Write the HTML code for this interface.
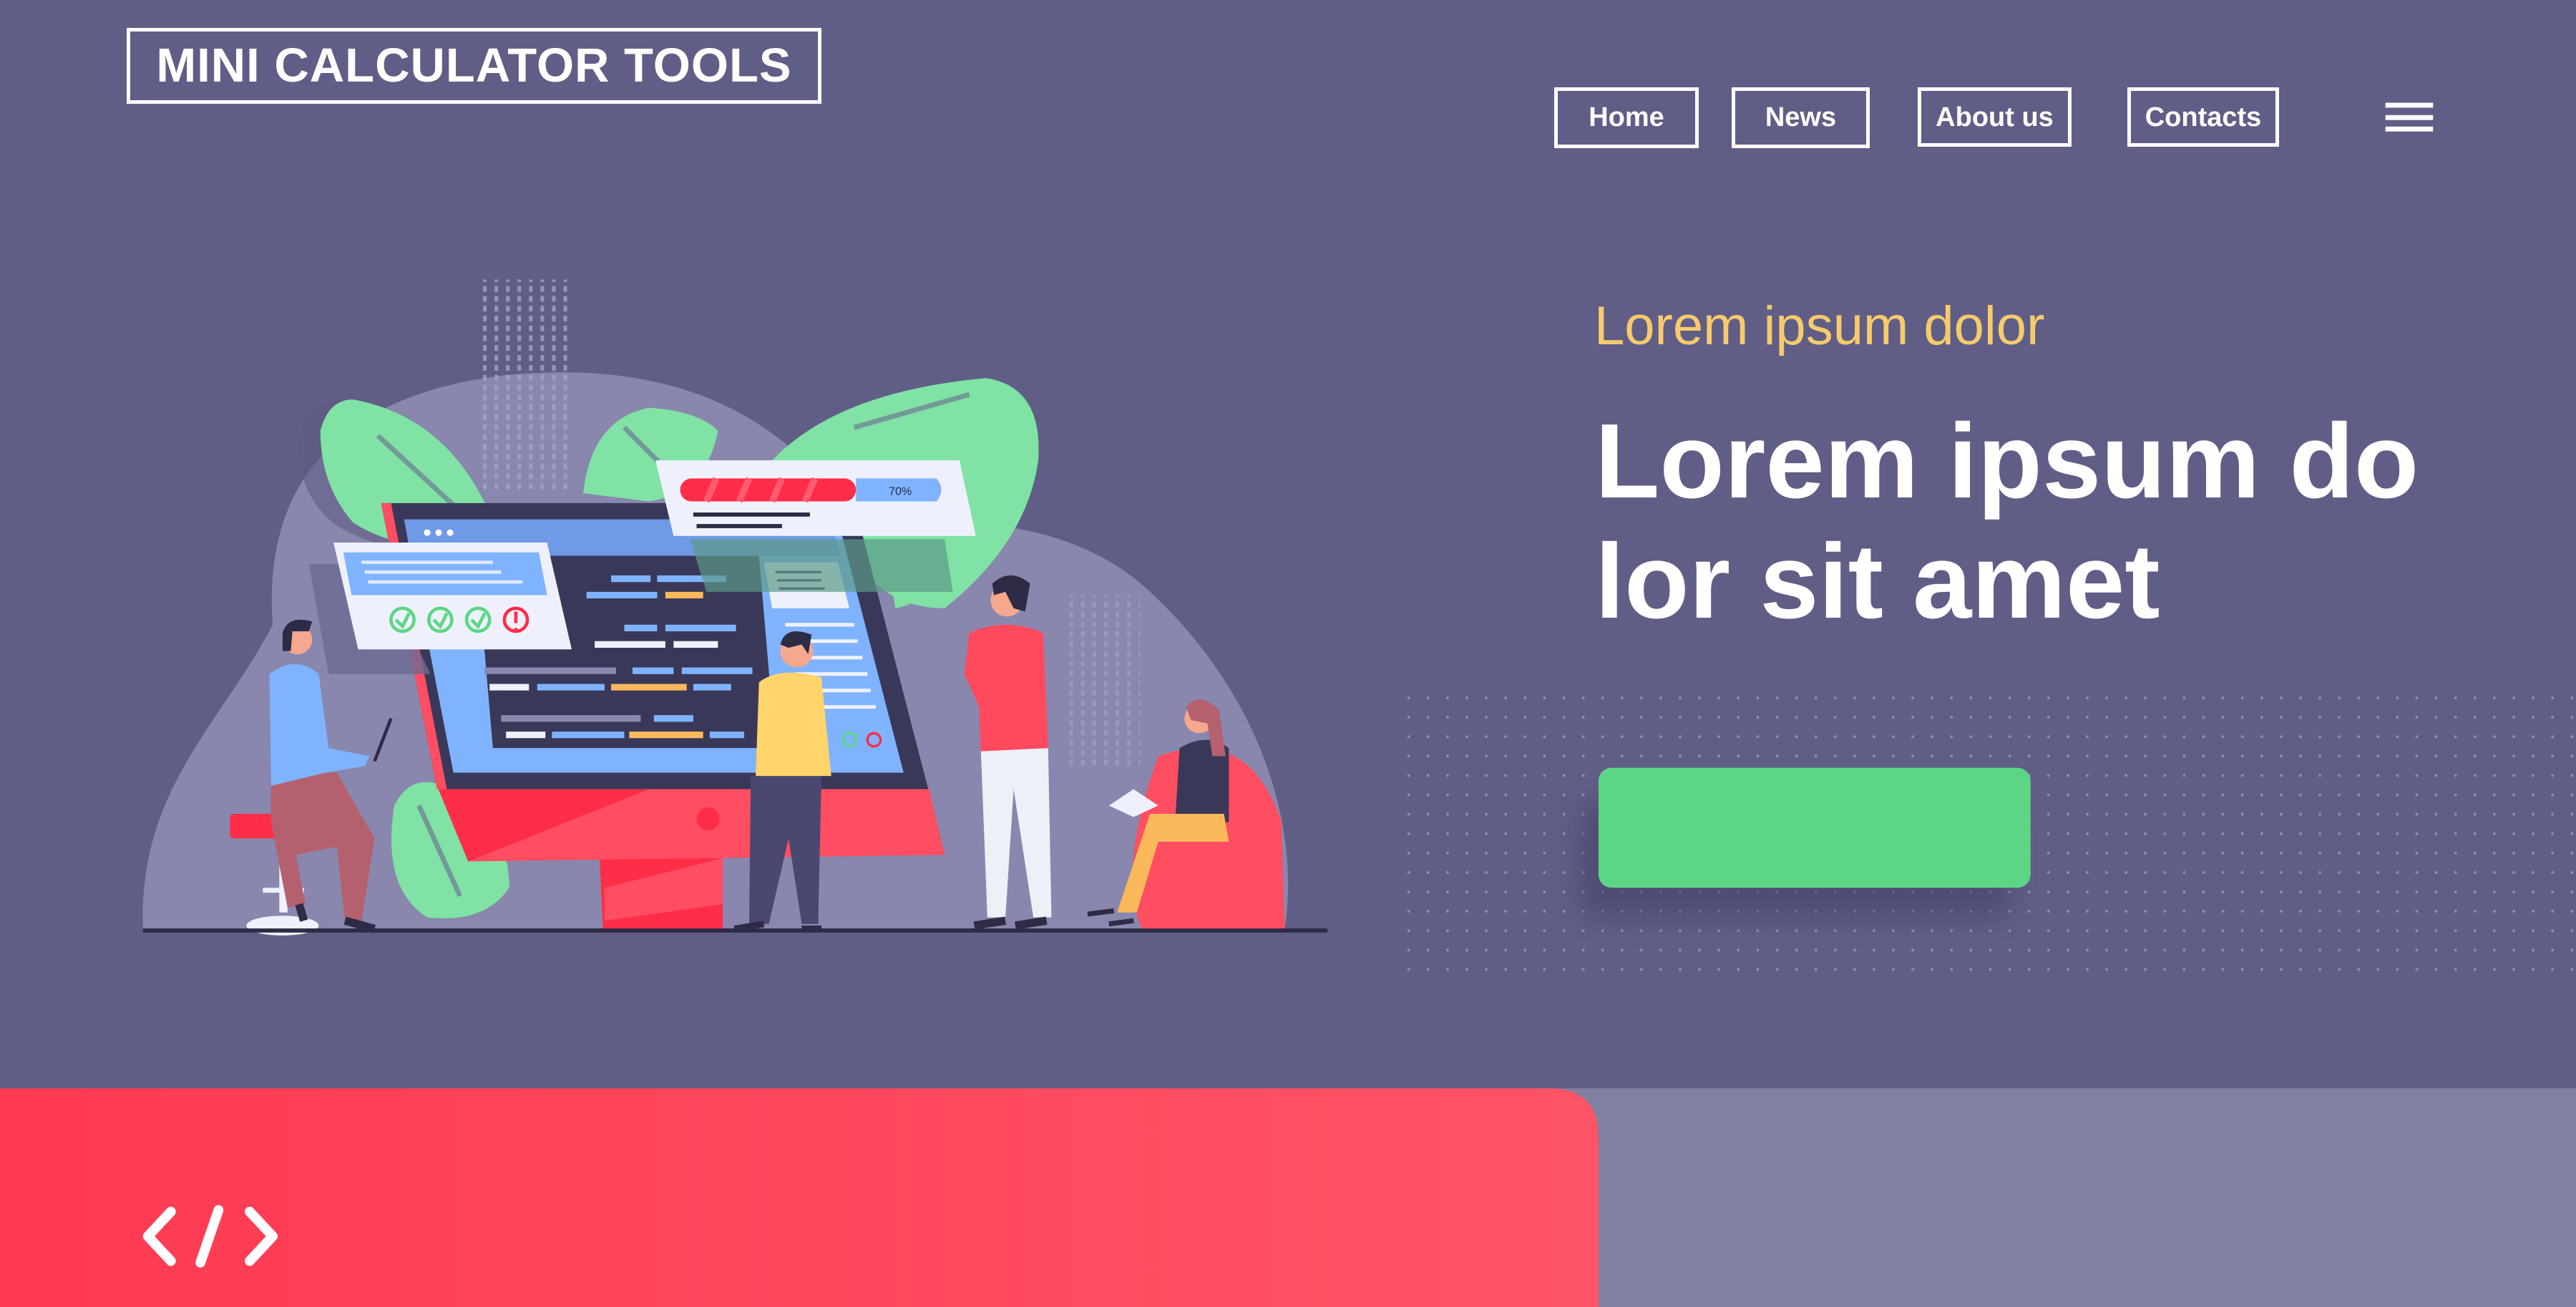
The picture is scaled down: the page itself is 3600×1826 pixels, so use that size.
<!DOCTYPE html>
<html><head><meta charset="utf-8"><style>
html,body{margin:0;padding:0;}
body{width:3600px;height:1826px;position:relative;overflow:hidden;background:#605e86;font-family:"Liberation Sans",Arial,sans-serif;}
svg.bg{position:absolute;left:0;top:0;width:3600px;height:1826px;}
.logo{position:absolute;left:177px;top:39px;width:961px;height:96px;border:5px solid #fff;color:#fff;font-weight:bold;font-size:67px;line-height:96px;text-align:center;white-space:nowrap;letter-spacing:1px;}
.nav{position:absolute;top:122px;height:75px;border:5px solid #fff;color:#fff;font-weight:bold;font-size:38px;line-height:75px;text-align:center;white-space:nowrap;}
.sub{position:absolute;left:2228px;top:418px;font-size:76px;line-height:76px;color:#f7cb6c;white-space:nowrap;}
.h1{position:absolute;left:2229px;top:561px;font-size:148px;line-height:168px;font-weight:bold;color:#fff;white-space:nowrap;}
</style></head><body>
<svg class="bg" viewBox="0 0 1568 795" preserveAspectRatio="none" xmlns="http://www.w3.org/2000/svg">
<defs>
<pattern id="dots" x="856" y="423" width="11.8" height="11.8" patternUnits="userSpaceOnUse"><circle cx="1.5" cy="1.5" r="0.9" fill="#8d8ab4"/></pattern>
<pattern id="vd" x="0" y="0" width="7" height="6" patternUnits="userSpaceOnUse"><rect x="0" y="0" width="2.2" height="3.5" fill="#a4a2c4"/></pattern>
<linearGradient id="rg" x1="0" x2="1" y1="0" y2="0"><stop offset="0" stop-color="#ff3a52"/><stop offset="1" stop-color="#ff5466"/></linearGradient>
<filter id="bl" x="-30%" y="-50%" width="160%" height="200%"><feGaussianBlur stdDeviation="8"/></filter>
</defs>
<rect x="856" y="423" width="712" height="168" fill="url(#dots)"/>
<rect x="962" y="488" width="262" height="70" rx="10" fill="#3f3d63" opacity="0.55" filter="url(#bl)"/>
<rect x="973" y="467" width="263" height="73" rx="8" fill="#5cd685"/>
<!-- blob -->
<path d="M87 565 C84 480 135 440 166 380 C160 300 200 240 310 228 C400 220 455 245 495 285 L520 330 C560 310 650 312 700 360 C765 420 792 500 782 565 Z" fill="#8987ad"/>
<rect x="290" y="170" width="56" height="130" fill="url(#vd)" opacity="0.8"/>
<rect x="648" y="362" width="46" height="105" fill="url(#vd)" opacity="0.6"/>
<!-- leaves -->
<path d="M182 268 Q185 245 205 243 Q270 250 300 330 Q250 345 205 320 Q180 300 182 268 Z" fill="#5e5c84" opacity="0.6"/>
<path d="M195 262 Q200 243 215 243 Q280 255 305 330 Q250 340 215 318 Q195 295 195 262 Z" fill="#80e2a4"/>
<path d="M355 300 Q360 255 395 248 Q425 250 437 262 Q430 300 395 305 Z" fill="#80e2a4"/>
<path d="M455 300 Q490 240 600 230 Q635 235 632 280 Q625 330 575 370 Q540 370 520 340 Q470 330 455 300 Z" fill="#80e2a4"/>
<path d="M540 340 Q560 325 575 340 Q570 365 545 370 Z" fill="#80e2a4"/>
<path d="M240 490 Q250 470 270 478 Q310 500 310 540 Q295 562 260 558 Q232 540 240 490 Z" fill="#80e2a4"/>
<path d="M230 265 L290 320 M520 260 L590 240 M380 260 L410 290 M255 490 L280 545" stroke="#6c6a92" stroke-width="3" opacity="0.6"/>
<!-- stand -->
<path d="M365 522 L440 522 L440 565 L367 565 Z" fill="#ff2d48"/>
<path d="M368 540 L440 522 L440 550 L368 560 Z" fill="#ff4d61"/>
<path d="M266 478 L565 478 L575 520 L285 524 Z" fill="#ff4d61"/>
<path d="M266 478 L400 478 L285 524 Z" fill="#ff2d48"/>
<circle cx="431" cy="498" r="7" fill="#ff2d48"/>
<path d="M232 306 L520 306 L565 480 L266 480 Z" fill="#3a3858"/>
<path d="M232 306 L238 306 L272 480 L266 480 Z" fill="#ff4d61"/>
<path d="M246 316 L510 316 L550 470 L276 470 Z" fill="#7fb3ff"/>
<path d="M246 316 L505 316 L512 338 L250 338 Z" fill="#6f9ae8"/>
<circle cx="260" cy="324" r="2" fill="#fff"/><circle cx="267" cy="324" r="2" fill="#fff"/><circle cx="274" cy="324" r="2" fill="#fff"/>
<path d="M290 338 L462 338 L472 455 L300 455 Z" fill="#3a3858"/>
<g stroke-width="4">
<path d="M372 352 L396 352 M400 352 L442 352" stroke="#7fb3ff"/>
<path d="M357 362 L400 362" stroke="#7fb3ff"/><path d="M405 362 L428 362" stroke="#fcb95c"/>
<path d="M380 382 L400 382 M405 382 L448 382" stroke="#7fb3ff"/>
<path d="M362 392 L405 392 M410 392 L437 392" stroke="#eef1fb"/>
<path d="M295 408 L375 408" stroke="#8987ad"/><path d="M385 408 L410 408 M415 408 L458 408" stroke="#7fb3ff"/>
<path d="M298 418 L322 418" stroke="#eef1fb"/><path d="M327 418 L368 418" stroke="#7fb3ff"/><path d="M372 418 L418 418" stroke="#fcb95c"/><path d="M422 418 L445 418" stroke="#7fb3ff"/>
<path d="M305 437 L390 437" stroke="#8987ad"/><path d="M398 437 L422 437" stroke="#7fb3ff"/>
<path d="M308 447 L332 447" stroke="#eef1fb"/><path d="M336 447 L380 447" stroke="#7fb3ff"/><path d="M383 447 L428 447" stroke="#fcb95c"/><path d="M432 447 L453 447" stroke="#7fb3ff"/>
</g>
<path d="M465 342 L510 342 L517 370 L470 370 Z" fill="#eef1fb"/>
<g stroke="#3a3858" stroke-width="1.5"><path d="M472 348 L500 348 M473 353 L500 353 M474 358 L502 358"/></g>
<g stroke="#eef1fb" stroke-width="2.2"><path d="M478 380 L520 380 M480 390 L522 390 M482 400 L525 400 M484 410 L528 410 M486 420 L530 420 M488 430 L533 430"/></g>
<circle cx="517" cy="450" r="4" fill="none" stroke="#5cd685" stroke-width="1.5"/><circle cx="532" cy="450" r="4" fill="none" stroke="#ff2d48" stroke-width="1.5"/>
<!-- left card -->
<path d="M188 343 L230 343 L262 410 L200 410 Z" fill="#6c6a92" opacity="0.8"/>
<path d="M203 330 L333 330 L348 395 L218 395 Z" fill="#eef1fb"/>
<path d="M209 336 L328 336 L333 362 L214 362 Z" fill="#7fb3ff"/>
<g stroke="#dfe8ff" stroke-width="2"><path d="M220 342 L300 342 M222 348 L305 348 M224 354 L318 354"/></g>
<g fill="none" stroke-width="2"><circle cx="245" cy="377" r="7" stroke="#5cd685"/><circle cx="268" cy="377" r="7" stroke="#5cd685"/><circle cx="291" cy="377" r="7" stroke="#5cd685"/><circle cx="314" cy="377" r="7" stroke="#ff2d48"/></g>
<g fill="none" stroke="#5cd685" stroke-width="2"><path d="M241 377 L245 381 L249 373 M264 377 L268 381 L272 373 M287 377 L291 381 L295 373"/></g>
<path d="M314 372 L314 379 M314 382 L314 383" stroke="#ff2d48" stroke-width="2"/>
<!-- top card -->
<path d="M399 280 L584 280 L594 326 L410 326 Z" fill="#eef1fb"/>
<path d="M420 328 L575 328 L580 360 L430 360 Z" fill="#5b9a88" opacity="0.7"/>
<rect x="414" y="291" width="107" height="14" rx="7" fill="#ff2d48"/>
<g stroke="#ff5c70" stroke-width="4"><path d="M430 305 L436 291 M450 305 L456 291 M470 305 L476 291 M490 305 L496 291"/></g>
<path d="M521 291 L570 291 Q576 298 570 305 L521 305 Z" fill="#7fb3ff"/>
<text x="541" y="301" font-family="Liberation Sans" font-size="7" fill="#2d2b45">70%</text>
<path d="M422 313 L493 313 M424 320 L476 320" stroke="#2d2b45" stroke-width="2.5"/>
<!-- left man -->
<rect x="140" y="495" width="64" height="15" rx="2" fill="#ff2d48"/>
<rect x="170" y="510" width="5" height="45" fill="#eef1fb"/>
<rect x="160" y="540" width="25" height="3" fill="#eef1fb"/>
<ellipse cx="172" cy="563" rx="22" ry="6" fill="#eef1fb"/>
<path d="M165 470 L205 470 L228 510 L220 560 L210 560 L205 515 L180 520 L186 550 L175 552 L165 500 Z" fill="#b5606e"/>
<path d="M164 410 Q180 398 194 410 L200 455 L225 460 L222 466 L198 470 L165 478 Z" fill="#7fb3ff"/>
<circle cx="181" cy="389" r="9" fill="#f5a88d"/>
<path d="M172 385 Q175 374 190 378 L188 384 L178 384 L177 396 L172 396 Z" fill="#2d2b45"/>
<path d="M228 463 L238 437" stroke="#2d2b45" stroke-width="2"/>
<path d="M210 560 L228 565 M182 550 L185 560" stroke="#2d2b45" stroke-width="5"/>
<!-- yellow man -->
<path d="M457 472 L500 472 L498 562 L488 562 L480 510 L468 562 L456 562 Z" fill="#4a4870"/>
<path d="M462 415 Q475 405 500 412 L506 472 L460 472 Z" fill="#ffd46b"/>
<circle cx="485" cy="396" r="10" fill="#f5a88d"/>
<path d="M475 392 Q478 380 494 386 L492 398 L488 392 L480 394 Z" fill="#2d2b45"/>
<path d="M447 565 L465 562 M488 565 L500 565" stroke="#2d2b45" stroke-width="4"/>
<!-- red man -->
<path d="M597 455 L638 455 L640 558 L629 558 L617 480 L612 558 L601 558 Z" fill="#eef0f7"/>
<path d="M590 385 Q612 375 635 385 L638 455 L597 457 L596 430 L587 410 Z" fill="#ff4a5e"/>
<circle cx="613" cy="365" r="10" fill="#f5a88d"/>
<path d="M604 355 Q615 345 627 355 L624 372 L617 370 L612 360 L605 362 Z" fill="#2d2b45"/>
<path d="M593 563 L612 560 M618 563 L637 560" stroke="#2d2b45" stroke-width="5"/>
<!-- woman -->
<path d="M705 460 Q760 440 780 500 L782 565 L695 565 Q680 530 705 460 Z" fill="#ff4d61"/>
<path d="M718 455 Q735 445 748 455 L748 500 L715 505 Z" fill="#3a3858"/>
<path d="M700 495 L745 495 L748 512 L705 512 L692 555 L680 555 Z" fill="#fcb95c"/>
<path d="M675 490 L690 480 L705 490 L690 497 Z" fill="#eef1fb"/>
<circle cx="730" cy="437" r="9" fill="#f5a88d"/>
<path d="M722 430 Q730 420 742 432 L746 460 L738 460 L735 440 L725 438 Z" fill="#b5606e"/>
<path d="M662 556 L678 554 M675 562 L690 560" stroke="#2d2b45" stroke-width="3"/>
<line x1="87" y1="566" x2="808" y2="566" stroke="#2d2b45" stroke-width="2.5"/>
<!-- bottom -->
<rect x="930" y="662" width="638" height="133" fill="#8180a1"/>
<path d="M0 662 L943 662 Q973 662 973 692 L973 795 L0 795 Z" fill="url(#rg)"/>
<g fill="none" stroke="#fff" stroke-width="6" stroke-linecap="round" stroke-linejoin="round">
<path d="M104 737 L90 752 L104 767"/><path d="M133 736 L122 768"/><path d="M152 737 L166 752 L152 767"/>
</g>
<g fill="#fff"><rect x="1452" y="62.5" width="29" height="3"/><rect x="1452" y="70" width="29" height="3"/><rect x="1452" y="77" width="29" height="3"/></g>
</svg>
<div class="logo">MINI CALCULATOR TOOLS</div>
<div class="nav" style="left:2172px;width:192px;">Home</div>
<div class="nav" style="left:2420px;width:183px;">News</div>
<div class="nav" style="left:2680px;width:205px;height:73px;line-height:75px;">About us</div>
<div class="nav" style="left:2973px;width:202px;height:73px;line-height:75px;">Contacts</div>
<div class="sub">Lorem ipsum dolor</div>
<div class="h1">Lorem ipsum do<br>lor sit amet</div>
</body></html>
